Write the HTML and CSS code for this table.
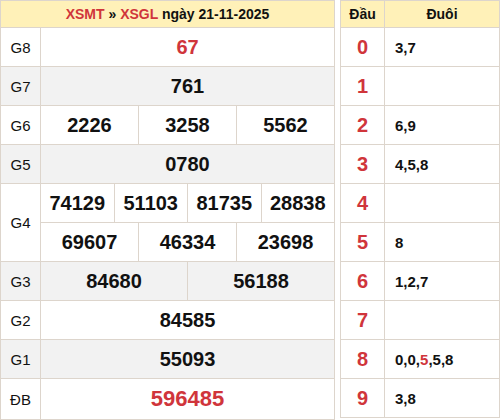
FILE: index.html
```
<!DOCTYPE html>
<html lang="vi">
<head>
<meta charset="utf-8">
<link rel="stylesheet" href="styles.css">
</head>
<body>
<div class="wrap">
<table class="kq">
<colgroup><col class="c-lbl"><col span="12" class="c-n"></colgroup>
<thead>
<tr><th colspan="13" class="title"><span class="red">XSMT</span> » <span class="red">XSGL</span> ngày 21-11-2025</th></tr>
</thead>
<tbody>
<tr><td class="lbl">G8</td><td colspan="12" class="num red">67</td></tr>
<tr class="alt"><td class="lbl">G7</td><td colspan="12" class="num">761</td></tr>
<tr><td class="lbl">G6</td><td colspan="4" class="num">2226</td><td colspan="4" class="num">3258</td><td colspan="4" class="num">5562</td></tr>
<tr class="alt"><td class="lbl">G5</td><td colspan="12" class="num">0780</td></tr>
<tr><td class="lbl" rowspan="2">G4</td><td colspan="3" class="num">74129</td><td colspan="3" class="num">51103</td><td colspan="3" class="num">81735</td><td colspan="3" class="num">28838</td></tr>
<tr><td colspan="4" class="num">69607</td><td colspan="4" class="num">46334</td><td colspan="4" class="num">23698</td></tr>
<tr class="alt"><td class="lbl">G3</td><td colspan="6" class="num">84680</td><td colspan="6" class="num">56188</td></tr>
<tr><td class="lbl">G2</td><td colspan="12" class="num">84585</td></tr>
<tr class="alt"><td class="lbl">G1</td><td colspan="12" class="num">55093</td></tr>
<tr><td class="lbl">ĐB</td><td colspan="12" class="num db red">596485</td></tr>
</tbody>
</table>
<table class="dd">
<colgroup><col class="c-dau"><col class="c-duoi"></colgroup>
<thead><tr><th>Đầu</th><th>Đuôi</th></tr></thead>
<tbody>
<tr><td class="dau">0</td><td class="duoi">3,7</td></tr>
<tr><td class="dau">1</td><td class="duoi"></td></tr>
<tr><td class="dau">2</td><td class="duoi">6,9</td></tr>
<tr><td class="dau">3</td><td class="duoi">4,5,8</td></tr>
<tr><td class="dau">4</td><td class="duoi"></td></tr>
<tr><td class="dau">5</td><td class="duoi">8</td></tr>
<tr><td class="dau">6</td><td class="duoi">1,2,7</td></tr>
<tr><td class="dau">7</td><td class="duoi"></td></tr>
<tr><td class="dau">8</td><td class="duoi">0,0,<span class="red">5</span>,5,8</td></tr>
<tr><td class="dau">9</td><td class="duoi">3,8</td></tr>
</tbody>
</table>
</div>
</body>
</html>
```
FILE: styles.css
```
* { box-sizing: border-box; }
body { margin: 0; font-family: "Liberation Sans", Arial, sans-serif; color: #111; background: #fff; }
.wrap { display: flex; gap: 5px; align-items: flex-start; }
table { border-collapse: collapse; table-layout: fixed; }
td, th { border: 1px solid #ddd5cc; padding: 0; text-align: center; }
.kq { width: 335px; }
.c-lbl { width: 40px; }
.dd { width: 160px; }
.c-dau { width: 44px; }
th { background: #fff1b8; font-size: 14px; font-weight: bold; height: 27px; }
td { height: 39px; }
.alt td { background: #f2f2f2; }
.lbl { font-size: 15px; }
.num { font-size: 20px; font-weight: bold; }
.db { font-size: 22px; height: 41px; }
.red { color: #d0353b; }
.dau { font-size: 20px; font-weight: bold; color: #d0353b; }
.duoi { text-align: left; padding-left: 10px; font-size: 15px; font-weight: bold; }
```
